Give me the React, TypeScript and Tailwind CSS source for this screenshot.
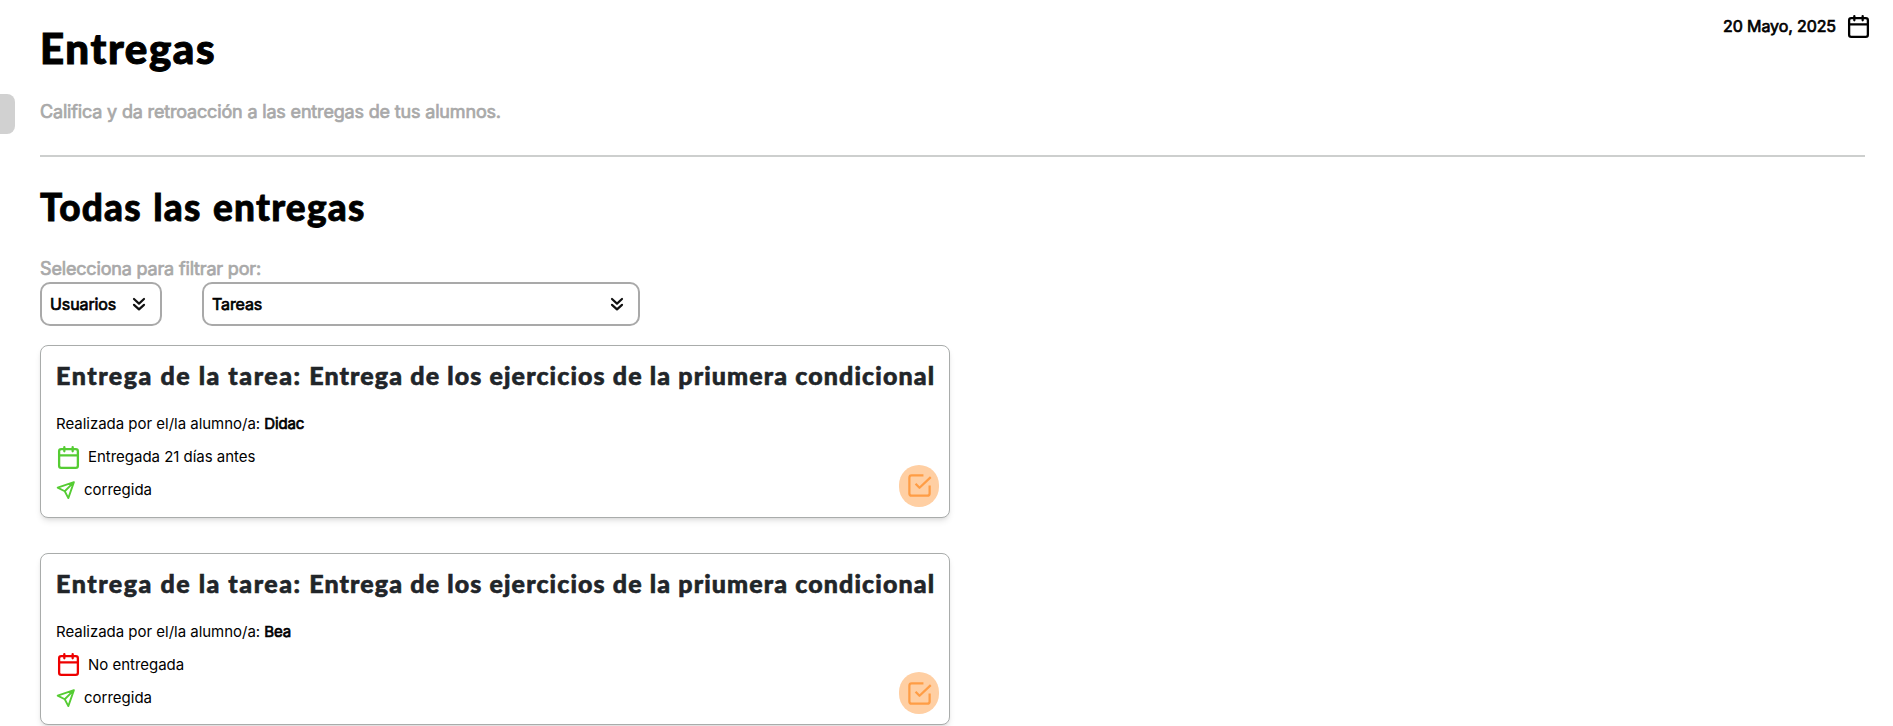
import React from "react";

const CalendarIcon = ({ className }: { className: string }) => (
  <svg className={className} viewBox="0 0 24 24" fill="none" stroke="currentColor" strokeWidth="2.2" strokeLinecap="round" strokeLinejoin="round">
    <rect x="3" y="4" width="18" height="18" rx="2" />
    <path d="M3 10h18M8 2v4M16 2v4" />
  </svg>
);

const ChevronsDown = () => (
  <svg className="h-5 w-5 text-[#111]" viewBox="0 0 24 24" fill="none" stroke="currentColor" strokeWidth="2.6" strokeLinecap="round" strokeLinejoin="round">
    <path d="m6 6 6 5.5L18 6M6 13l6 5.5L18 13" />
  </svg>
);

const SendIcon = () => (
  <svg className="h-5 w-5 shrink-0 text-[#55cc33]" viewBox="0 0 24 24" fill="none" stroke="currentColor" strokeWidth="2.2" strokeLinecap="round" strokeLinejoin="round">
    <path d="M21.500 2.500 2 9.200l8.500 4.300 4.300 8.300zM21.500 2.500l-11 11" />
  </svg>
);

const CheckIcon = () => (
  <svg className="h-[27px] w-[27px] text-[#ff9d45]" viewBox="0 0 24 24" fill="none" stroke="currentColor" strokeWidth="2" strokeLinecap="butt" strokeLinejoin="round">
    <path d="M15.500 3H5a2 2 0 0 0-2 2v14a2 2 0 0 0 2 2h14a2 2 0 0 0 2-2v-7M8.500 10.500l3.500 3.500L22 4.500" />
  </svg>
);

const heading = "font-['Lato',sans-serif] font-black whitespace-nowrap";
const faux = "[-webkit-text-stroke:0.7px_currentColor]";

function Card({ student, status, late }: { student: string; status: string; late?: boolean }) {
  return (
    <article className="relative h-[172.5px] w-[910px] rounded-lg border border-[#a9acab] bg-white px-[15px] pt-[13px] shadow-md">
      <h3 className={`${heading} h-8 text-[25px] leading-8 tracking-[1.12px] text-[#212529] [-webkit-text-stroke:0.6px_currentColor]`}>
        <span className="tracking-[1.54px]">Entrega de la tarea: </span>
        Entrega de los ejercicios de la priumera condicional
      </h3>
      <p className="mt-[21px] h-6 text-[15px] leading-6 tracking-[-0.02px]">
        Realizada por el/la alumno/a: <span className={`${faux} tracking-[-0.15px]`}>{student}</span>
      </p>
      <p className="mt-[9px] flex h-6 items-center text-[15px] leading-6 tracking-[-0.02px]">
        <CalendarIcon className={late ? "h-[25px] w-[25px] shrink-0 text-[#ee0000]" : "h-[25px] w-[25px] shrink-0 text-[#55cc33]"} />
        <span className="ml-[7px]">{status}</span>
      </p>
      <p className="mt-[9px] flex h-6 items-center text-[15px] leading-6">
        <SendIcon />
        <span className="ml-2">corregida</span>
      </p>
      <button className="absolute right-[10px] bottom-[10px] flex h-[42px] w-10 items-center justify-center rounded-full bg-[#ffcfa3]">
        <CheckIcon />
      </button>
    </article>
  );
}

export default function App() {
  return (
    <div className="relative h-[726px] overflow-hidden bg-white pr-7 pl-10 font-['Inter',sans-serif] text-black">
      <div className="absolute top-[94px] left-0 h-10 w-[15px] rounded-r-lg bg-[#d1d1d1]" />
      <header className="flex h-[157px] justify-between border-b-2 border-[#cdcfce]">
        <div className="pt-[23px]">
          <h1 className={`${heading} h-[50px] text-[42px] leading-[50px] tracking-[1.6px] [-webkit-text-stroke:1px_currentColor]`}>Entregas</h1>
          <p className={`${faux} mt-[27px] h-6 text-[18px] leading-6 tracking-[-0.17px] text-[#a9a9a9]`}>
            Califica y da retroacción a las entregas de tus alumnos.
          </p>
        </div>
        <div className="-mr-[6px] flex h-[52px] items-center gap-[10px]">
          <span className={`${faux} text-[16px] tracking-[-0.1px]`}>20 Mayo, 2025</span>
          <CalendarIcon className="h-[25px] w-[25px]" />
        </div>
      </header>
      <main>
        <h2 className={`${heading} mt-7 h-11 text-[37px] leading-[44px] tracking-[1.2px] [word-spacing:1.5px] [-webkit-text-stroke:0.8px_currentColor]`}>Todas las entregas</h2>
        <p className={`${faux} mt-[28px] h-6 text-[18px] leading-6 tracking-[-0.17px] text-[#a9a9a9]`}>Selecciona para filtrar por:</p>
        <div className="mt-px flex gap-10">
          <button className="flex h-11 w-[122px] items-center justify-between rounded-[10px] border-2 border-[#a9a9a9] pr-[11px] pl-2">
            <span className={`${faux} text-[16px] tracking-[-0.1px]`}>Usuarios</span>
            <ChevronsDown />
          </button>
          <button className="flex h-11 w-[438px] items-center justify-between rounded-[10px] border-2 border-[#a9a9a9] pr-[11px] pl-2">
            <span className={`${faux} text-[16px] tracking-[-0.1px]`}>Tareas</span>
            <ChevronsDown />
          </button>
        </div>
        <section className="mt-[19px] flex flex-col gap-[35px]">
          <Card student="Didac" status="Entregada 21 días antes" />
          <Card student="Bea" status="No entregada" late />
        </section>
      </main>
    </div>
  );
}
